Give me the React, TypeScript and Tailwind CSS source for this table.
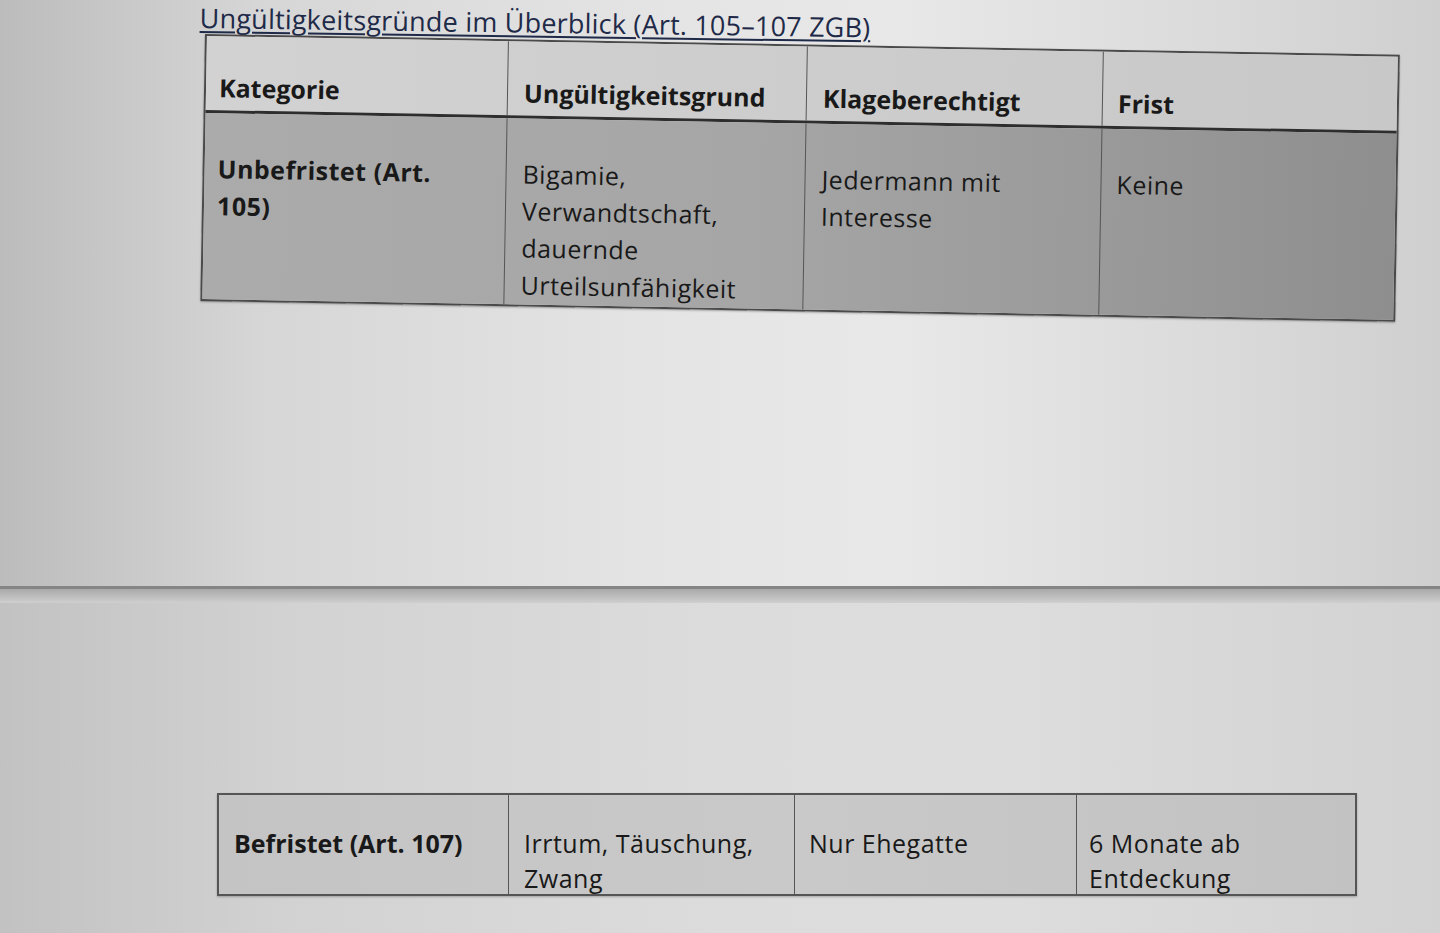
const upper = [
  { w: "w-[303px]", pl: "pl-[13px]", head: "Kategorie", body: ["Unbefristet (Art.", "105)"], bold: true },
  { w: "w-[300px]", pl: "pl-[16px]", head: "Ungültigkeitsgrund", body: ["Bigamie,", "Verwandtschaft,", "dauernde", "Urteilsunfähigkeit"], bold: false },
  { w: "w-[297px]", pl: "pl-[16px]", head: "Klageberechtigt", body: ["Jedermann mit", "Interesse"], bold: false },
  { w: "w-[295px]", pl: "pl-[15px]", head: "Frist", body: ["Keine"], bold: false },
];

const lower = [
  { w: "w-[291px]", pl: "pl-[15px]", lines: ["Befristet (Art. 107)"], bold: true },
  { w: "w-[287px]", pl: "pl-[15px]", lines: ["Irrtum, Täuschung,", "Zwang"], bold: false },
  { w: "w-[283px]", pl: "pl-[14px]", lines: ["Nur Ehegatte"], bold: false },
  { w: "w-[279px]", pl: "pl-[12px]", lines: ["6 Monate ab", "Entdeckung"], bold: false },
];

export default function App() {
  return (
    <div className="h-[933px] w-[1440px] overflow-hidden flex flex-col text-[#191919] font-['Open_Sans','Lato',sans-serif]">
      {/* upper page */}
      <div className="h-[586px] bg-[linear-gradient(90deg,#bcbcbc_0%,#d6d6d6_18%,#e4e4e4_45%,#e8e8e8_62%,#dadada_85%,#cfcfcf_100%)] pl-[200px] pt-[1px]">
        <h1 className="origin-top-left rotate-[0.8deg] text-[27px] leading-[34px] text-[#1e2a48] underline underline-offset-[3px] decoration-[2px] tracking-[0.2px]">
          Ungültigkeitsgründe im Überblick (Art. 105–107 ZGB)
        </h1>
        <div className="ml-[5px] w-[1195px] origin-top-left rotate-[1deg] border-2 border-[#4a4a4a] shadow-[0_1px_2px_rgba(0,0,0,0.3)] -mt-[1px]">
          <div className="flex h-[77px] border-b-[3px] border-[#2e2e2e] bg-[linear-gradient(90deg,#d2d2d2,#cdcdcd_50%,#c8c8c8)]">
            {upper.map((c, i) => (
              <div
                key={c.head}
                className={`${c.w} ${c.pl} flex items-end pb-[10px] ${i < 3 ? "border-r-[1.5px] border-[#555]" : ""}`}
              >
                <span className="text-[25px] font-bold leading-none">{c.head}</span>
              </div>
            ))}
          </div>
          <div className="flex h-[186px] bg-[linear-gradient(90deg,#ababab,#a6a6a6_45%,#9a9a9a_75%,#8e8e8e)]">
            {upper.map((c, i) => (
              <div
                key={c.head}
                className={`${c.w} ${c.pl} pt-[37px] ${i < 3 ? "border-r-[1.5px] border-[#555]" : ""}`}
              >
                {c.body.map((l) => (
                  <div
                    key={l}
                    className={`text-[25px] leading-[37px] tracking-[0.5px] ${c.bold ? "font-bold" : ""}`}
                  >
                    {l}
                  </div>
                ))}
              </div>
            ))}
          </div>
        </div>
      </div>

      {/* fold */}
      <div className="h-[3px] bg-[#858585]" />
      <div className="h-[14px] bg-[linear-gradient(180deg,#a9a9a9,#cfcfcf)]" />

      {/* lower page */}
      <div className="flex-1 bg-[linear-gradient(90deg,#c2c2c2_0%,#d2d2d2_20%,#dcdcdc_50%,#dddddd_70%,#d2d2d2_100%)] pl-[217px] pt-[190px]">
        <div className="flex h-[103px] w-[1140px] border-2 border-[#555] bg-[linear-gradient(90deg,#c4c4c4,#c9c9c9_50%,#c2c2c2)] shadow-[0_1px_2px_rgba(0,0,0,0.25)]">
          {lower.map((c, i) => (
            <div
              key={c.lines[0]}
              className={`${c.w} ${c.pl} pt-[31px] ${i < 3 ? "border-r-[1.5px] border-[#555]" : ""}`}
            >
              {c.lines.map((l) => (
                <div
                  key={l}
                  className={`text-[25px] leading-[35px] ${c.bold ? "font-bold" : "tracking-[0.5px]"}`}
                >
                  {l}
                </div>
              ))}
            </div>
          ))}
        </div>
      </div>
    </div>
  );
}
